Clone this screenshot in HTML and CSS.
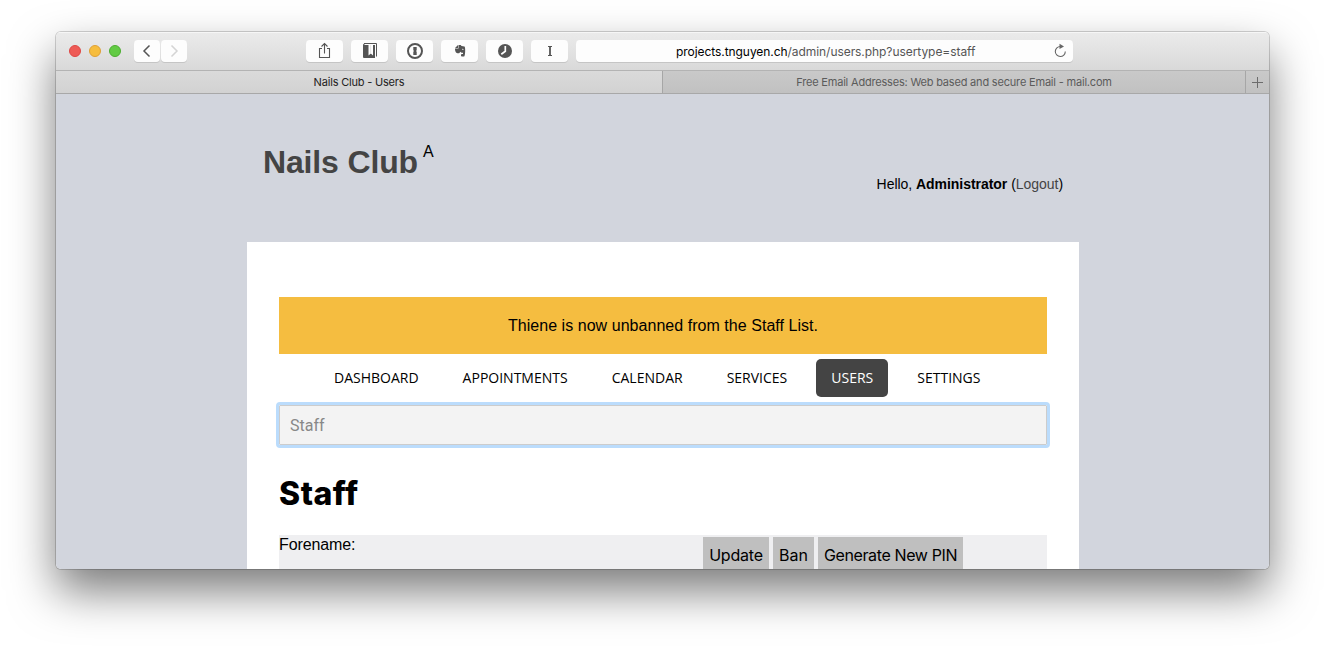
FILE: index.html
```html
<!DOCTYPE html>
<html lang="en">
<head>
<meta charset="utf-8">
<title>Nails Club - Users</title>
<link rel="stylesheet" href="styles.css">
</head>
<body>
<div class="window">
  <header class="toolbar">
    <div class="lights"><i class="light close"></i><i class="light minimise"></i><i class="light zoom"></i></div>
    <div class="history">
      <span class="button small"><svg width="26" height="22"><path d="M15.5 5.5 10 11l5.500 5.500" fill="none" stroke="#555" stroke-width="1.500"/></svg></span>
      <span class="button small"><svg width="26" height="22"><path d="M10.500 5.500 16 11l-5.500 5.500" fill="none" stroke="#d4d4d4" stroke-width="1.500"/></svg></span>
    </div>
    <div class="extensions">
      <span class="button"><svg width="37" height="22"><path d="M16 8.500H13.500v9h10v-9H21M18.500 13.500V4M15.500 6.500l3-3 3 3" fill="none" stroke="#555" stroke-width="1.100"/></svg></span>
      <span class="button"><svg width="37" height="22"><path d="M12 5q0-1.500 1.500-1.500V5H24v13H13q-1 0-1-1z" fill="#555"/><path d="M13 3.500h12.500v13" fill="none" stroke="#555"/><path d="M17.500 5h4.500v10.500l-2.200-2-2.300 2z" fill="#fff"/><path d="M19.300 5h.8v9h-.8z" fill="#ddd"/></svg></span>
      <span class="button"><svg width="37" height="22"><circle cx="19" cy="11" r="7" fill="none" stroke="#555" stroke-width="2"/><path d="M17.300 7h3.400v3.300l-.7.700.7.700V15h-3.400v-3.300l.7-.7-.7-.7z" fill="#555"/></svg></span>
      <span class="button"><svg width="37" height="22"><path d="M17 5v3h-3zM17.500 5h2.200l.8 1 3 .5c1 .5 1 8.500-.3 10h-2.500c-1.200-.4-1-2.500.3-2.500h1v-1.200h-1.500l-1.300-1-.7 1.300c-1.500.4-3 .1-3.500-.6-.8-1.400-1-2.300-1-4h3.500z" fill="#555"/><path d="M21 9.500q1-.8 1.500.3" fill="none" stroke="#fff" stroke-width=".8"/></svg></span>
      <span class="button"><svg width="37" height="22"><circle cx="19" cy="11" r="7" fill="#555"/><path d="M19.300 6v5.200l-4 3" fill="none" stroke="#fff" stroke-width="1.700"/></svg></span>
      <span class="button"><svg width="37" height="22"><path d="M17 6.500h4M17 15.500h4" fill="none" stroke="#555"/><path d="M19 6.500v9" stroke="#555" stroke-width="1.800"/></svg></span>
    </div>
    <div class="address">
      <span class="url"><b>projects.tnguyen.ch</b>/admin/users.php?usertype=staff</span>
      <svg class="reload" width="14" height="16"><path d="M6.500 3.500A5 5 0 1 0 11.300 8.500" fill="none" stroke="#666" stroke-width="1.100"/><path d="M5.500 .8 10 3.400 5.500 6z" fill="#666"/></svg>
    </div>
  </header>
  <div class="tabs">
    <div class="tab current"><span>Nails Club - Users</span></div>
    <div class="tab"><span>Free Email Addresses: Web based and secure Email - mail.com</span></div>
    <div class="add"><svg width="11" height="11"><path d="M5.500 0v11M0 5.500h11" stroke="#6c6c6c"/></svg></div>
  </div>
  <main class="page">
    <div class="masthead">
      <h1 class="brand">Nails Club<span class="badge">A</span></h1>
      <p class="greeting">Hello, <b>Administrator</b> (<a class="logout">Logout</a>)</p>
    </div>
    <section class="card">
      <div class="notice">Thiene is now unbanned from the Staff List.</div>
      <nav class="menu">
        <a class="item">DASHBOARD</a><a class="item">APPOINTMENTS</a><a class="item">CALENDAR</a><a class="item">SERVICES</a><a class="item active">USERS</a><a class="item">SETTINGS</a>
      </nav>
      <div class="select"><span class="select-text">Staff</span></div>
      <h2 class="heading">Staff</h2>
      <div class="row">
        <span class="label">Forename:</span>
        <div class="actions"><span class="action update">Update</span><span class="action ban">Ban</span><span class="action pin">Generate New PIN</span></div>
      </div>
    </section>
  </main>
</div>
</body>
</html>
```
FILE: styles.css
```css
* { box-sizing: border-box; }
body { margin: 0; height: 649px; padding: 32px 56px 0; background: #fff; overflow: hidden; font-family: "Liberation Sans", Arial, sans-serif; color: #000; }
svg { display: block; flex: none; }
.window { width: 1213px; height: 537px; display: flex; flex-direction: column; overflow: hidden; border-radius: 5px; box-shadow: 0 0 0 1px rgba(0,0,0,.17), 0 22px 46px rgba(0,0,0,.52); white-space: nowrap; }
.toolbar { height: 39px; flex: none; display: flex; align-items: flex-start; padding: 8px 0 0 13px; background: linear-gradient(#ebebeb, #d9d9d9); border-bottom: 1px solid #b3b3b3; box-shadow: inset 0 1px #f6f6f6; }
.lights { display: flex; gap: 8px; padding-top: 5px; width: 65px; }
.light { width: 12px; height: 12px; border-radius: 50%; border: 1px solid; }
.close { background: #ee5b56; border-color: #df4744; }
.minimise { background: #f6bd3e; border-color: #dfa035; }
.zoom { background: #62cb44; border-color: #4cad30; }
.history { display: flex; gap: 1px; width: 172px; }
.button { display: flex; width: 37px; height: 22px; background: #fdfdfd; border-radius: 4px; box-shadow: 0 1px #c5c5c5; }
.small { width: 26px; }
.extensions { display: flex; gap: 8px; width: 270px; }
.address { width: 497px; height: 22px; display: flex; align-items: center; padding-left: 100px; background: #fdfdfd; border-radius: 4px; box-shadow: 0 1px #c5c5c5; }
.url { width: 378px; font: 12px/23px Inter, sans-serif; color: #555; letter-spacing: -.06px; }
.url b { font-weight: 400; color: #000; }
.tabs { height: 23px; flex: none; display: flex; background: linear-gradient(#c9c9c9, #c1c1c1); border-bottom: 1px solid #a8a8a8; font: 11px/23px Inter, sans-serif; letter-spacing: -.19px; color: #5b5b5b; }
.tab { width: 583px; text-align: center; border-left: 1px solid #a6a6a6; }
.current { width: 606px; border-left: 0; background: linear-gradient(#dadada, #d2d2d2); color: #222; }
.add { flex: 1; border-left: 1px solid #a6a6a6; padding: 6px 0 0 6px; }
.page { flex: 1; background: #d2d5dd; padding: 0 190px 0 191px; overflow: hidden; }
.masthead { height: 148px; display: flex; justify-content: space-between; padding: 0 16px; }
.brand { margin: 0; padding-top: 49px; font-size: 32px; line-height: 38px; letter-spacing: -.15px; color: #444; }
.badge { font-size: 16px; font-weight: 400; color: #000; padding-left: 5px; vertical-align: 16px; line-height: 0; }
.greeting { margin: 0; padding-top: 82px; font-size: 14px; line-height: 16px; letter-spacing: -.04px; }
.logout { color: #444; }
.card { height: 340px; padding: 55px 32px 0; background: #fff; }
.notice { height: 57px; background: #f5bd40; text-align: center; font-size: 16px; line-height: 57px; letter-spacing: .04px; }
.menu { display: flex; gap: 14px; padding: 5px 0 0 40px; font: 14px/38px "Open Sans", sans-serif; }
.item { padding: 0 15px; border-radius: 5px; }
.active { background: #444; color: #fff; }
.select { margin-top: 8px; height: 40px; padding-left: 10px; background: #f3f3f3; border: 1px solid #ccc; outline: 3px solid #bbdcfc; border-radius: 1px; font: 16px/39px Roboto, sans-serif; color: #888; }
.heading { margin: 29px 0 0; height: 61px; font: 800 32px/40px Inter, sans-serif; letter-spacing: .5px; }
.row { height: 60px; display: flex; background: #efeff1; }
.label { width: 424px; font-size: 16px; line-height: 19px; letter-spacing: -.1px; }
.actions { display: flex; gap: 4px; padding-top: 2px; }
.action { height: 40px; text-align: center; background: #bfbfbf; font: 16px/37px Inter, sans-serif; letter-spacing: -.2px; }
.update { width: 66px; }
.ban { width: 41px; letter-spacing: 0; }
.pin { width: 145px; letter-spacing: -.38px; }
```
